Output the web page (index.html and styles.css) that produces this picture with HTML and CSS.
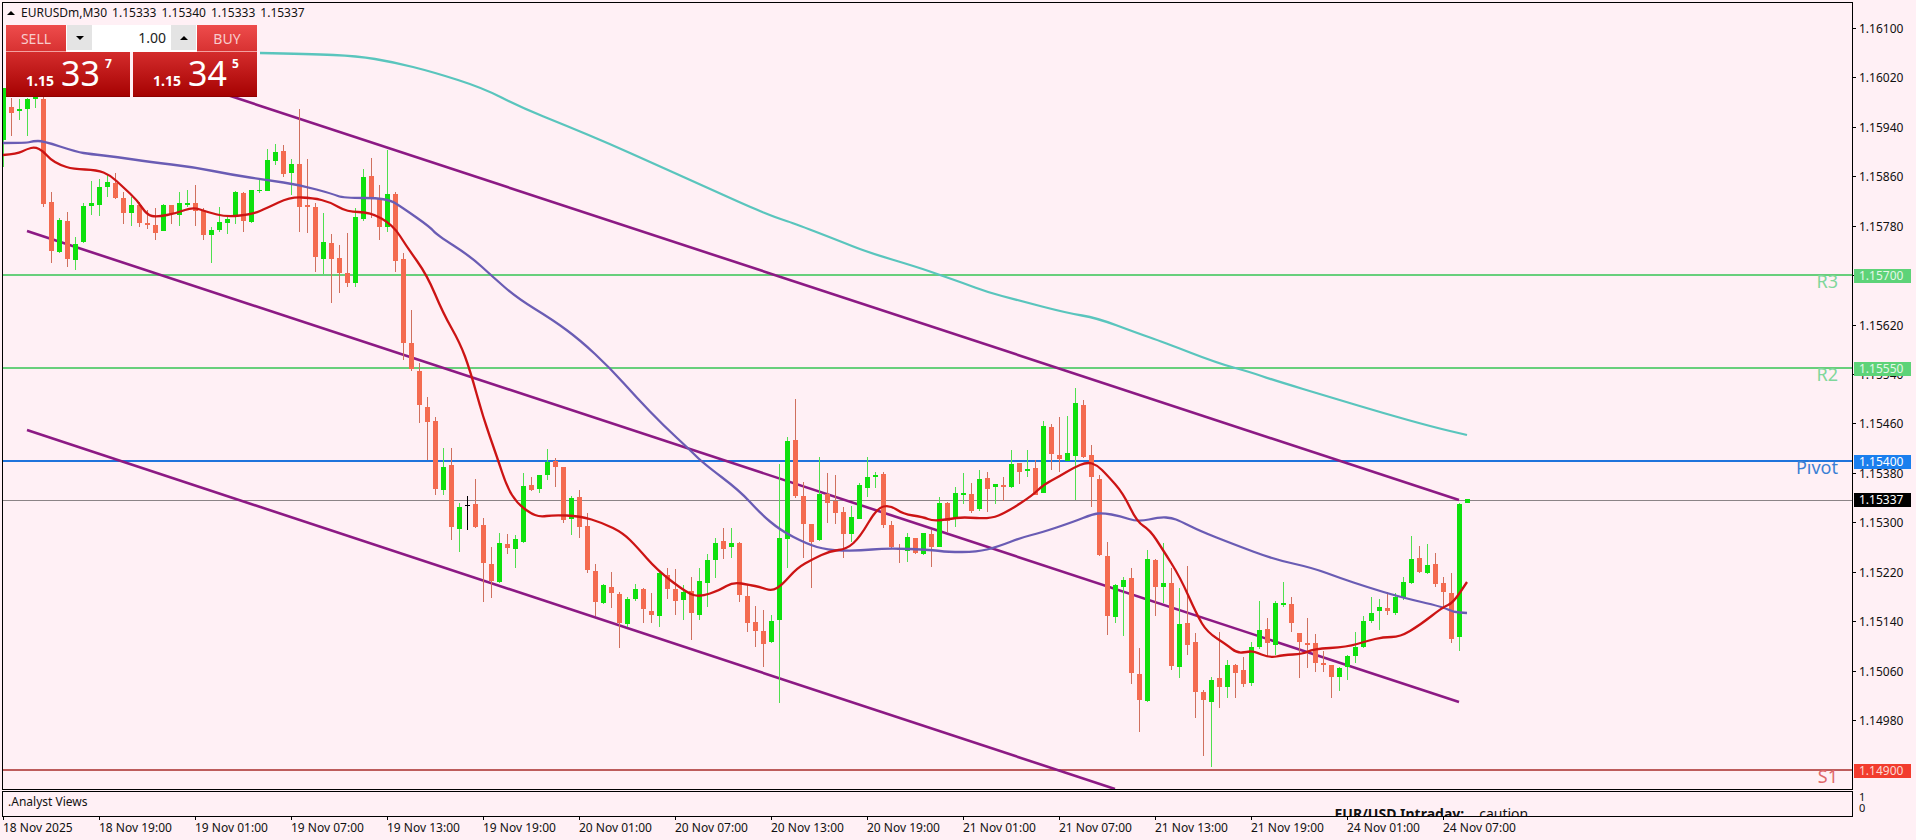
FILE: index.html
```html
<!DOCTYPE html>
<html lang="en">
<head>
    <meta charset="UTF-8">
    <title>EURUSDm,M30</title>
    <link rel="stylesheet" href="styles.css">
</head>
<body>
    <div class="terminal">
        <div class="workspace">
            <div class="panes">
                <div class="chart">
                    <svg class="plot" viewBox="3 3 1849 786" width="1849" height="786">
                        <!-- price levels -->
                        <line class="level level-r" x1="3" y1="275" x2="1852" y2="275"/>
                        <line class="level level-r" x1="3" y1="368" x2="1852" y2="368"/>
                        <line class="level level-pivot" x1="3" y1="461" x2="1852" y2="461"/>
                        <line class="level level-s" x1="3" y1="770" x2="1852" y2="770"/>
                        <line class="bid-line" x1="3" y1="500.5" x2="1852" y2="500.5"/>

                        <!-- channel -->
                        <line class="trend" x1="200" y1="86" x2="1459" y2="500"/>
                        <line class="trend" x1="27" y1="231" x2="1459" y2="702"/>
                        <line class="trend" x1="27" y1="430" x2="1115" y2="789"/>

                        <g id="candles"></g>
                        <g id="averages"></g>

                        <text class="level-name name-r" x="1838" y="288">R3</text>
                        <text class="level-name name-r" x="1838" y="381">R2</text>
                        <text class="level-name name-pivot" x="1838" y="474">Pivot</text>
                        <text class="level-name name-s" x="1838" y="783">S1</text>
                    </svg>

                    <div class="symbol-bar">
                        <span class="symbol-arrow"></span>
                        <span class="symbol-name">EURUSDm,M30</span>
                        <span>1.15333</span>
                        <span>1.15340</span>
                        <span>1.15333</span>
                        <span>1.15337</span>
                    </div>

                    <div class="trade-panel">
                        <div class="trade-row">
                            <div class="trade-btn sell-btn">SELL</div>
                            <div class="lots">
                                <div class="lots-step"><span class="arrow-down"></span></div>
                                <div class="lots-value">1.00</div>
                                <div class="lots-step"><span class="arrow-up"></span></div>
                            </div>
                            <div class="trade-btn buy-btn">BUY</div>
                        </div>
                        <div class="quote-row">
                            <div class="quote">
                                <span class="quote-head">1.15</span>
                                <span class="quote-big">33</span>
                                <span class="quote-point">7</span>
                            </div>
                            <div class="quote">
                                <span class="quote-head">1.15</span>
                                <span class="quote-big">34</span>
                                <span class="quote-point">5</span>
                            </div>
                        </div>
                    </div>
                </div>

                <div class="subwindow">
                    <span class="sub-title">.Analyst Views</span>
                    <span class="news"><b>EUR/USD Intraday:</b><span class="news-text">caution.</span></span>
                </div>
            </div>

            <div class="price-axis">
                <div class="price">1.16100</div>
                <div class="price">1.16020</div>
                <div class="price">1.15940</div>
                <div class="price">1.15860</div>
                <div class="price">1.15780</div>
                <div class="price"></div>
                <div class="price">1.15620</div>
                <div class="price">1.15540</div>
                <div class="price">1.15460</div>
                <div class="price">1.15380</div>
                <div class="price">1.15300</div>
                <div class="price">1.15220</div>
                <div class="price">1.15140</div>
                <div class="price">1.15060</div>
                <div class="price">1.14980</div>
                <div class="sub-scale">
                    <div>1</div>
                    <div>0</div>
                </div>

                <div class="tag tag-r3">1.15700</div>
                <div class="tag tag-r2">1.15550</div>
                <div class="tag tag-pivot">1.15400</div>
                <div class="tag tag-bid">1.15337</div>
                <div class="tag tag-s1">1.14900</div>
            </div>
        </div>

        <div class="time-axis">
            <div class="time">18 Nov 2025</div>
            <div class="time">18 Nov 19:00</div>
            <div class="time">19 Nov 01:00</div>
            <div class="time">19 Nov 07:00</div>
            <div class="time">19 Nov 13:00</div>
            <div class="time">19 Nov 19:00</div>
            <div class="time">20 Nov 01:00</div>
            <div class="time">20 Nov 07:00</div>
            <div class="time">20 Nov 13:00</div>
            <div class="time">20 Nov 19:00</div>
            <div class="time">21 Nov 01:00</div>
            <div class="time">21 Nov 07:00</div>
            <div class="time">21 Nov 13:00</div>
            <div class="time">21 Nov 19:00</div>
            <div class="time">24 Nov 01:00</div>
            <div class="time">24 Nov 07:00</div>
        </div>
    </div>

    <script src="chart.js"></script>
</body>
</html>
```

FILE: styles.css
```css
* {
    box-sizing: border-box;
}
body {
    margin: 0;
    background-color: #fff0f5;
    font-family: "Noto Sans", sans-serif;
    font-size: 12px;
    color: #111;
    overflow: hidden;
}
.terminal {
    width: 1916px;
    height: 840px;
    padding: 2px 0 0 2px;
}
.workspace {
    display: flex;
}
.panes {
    width: 1851px;
}

/* chart window */
.chart {
    position: relative;
    height: 788px;
    border: 1px solid #000;
}
.plot {
    display: block;
    overflow: hidden;
}
.level {
    stroke-width: 2;
}
.level-r {
    stroke: #68cf7c;
}
.level-pivot {
    stroke: #1f74dc;
}
.level-s {
    stroke: #bd5c5c;
}
.bid-line {
    stroke: #8b8486;
    stroke-width: 1;
}
.trend {
    stroke: #8c1a84;
    stroke-width: 2.6;
}
.ma {
    fill: none;
    stroke-width: 2.3;
    stroke-linejoin: round;
}
.ma-slow {
    stroke: #5ac5bd;
}
.ma-mid {
    stroke: #6a5cb4;
}
.ma-fast {
    stroke: #cc1414;
}
.wick-up {
    fill: #4fe04f;
}
.wick-down {
    fill: #d0705e;
}
.wick-doji {
    fill: #000;
}
.body-up {
    fill: #0ee00e;
}
.body-down {
    fill: #f46b50;
}
.level-name {
    font-size: 18px;
    text-anchor: end;
}
.name-r {
    fill: #7fd79b;
}
.name-pivot {
    fill: #3b7fd4;
}
.name-s {
    fill: #e0686a;
}

/* symbol line */
.symbol-bar {
    position: absolute;
    top: 2px;
    left: 4px;
    display: flex;
    align-items: center;
    gap: 5px;
    height: 16px;
    line-height: 16px;
}
.symbol-arrow {
    width: 0;
    height: 0;
    border-left: 4px solid transparent;
    border-right: 4px solid transparent;
    border-bottom: 4px solid #000;
    margin-right: 1px;
}

/* one click trading */
.trade-panel {
    position: absolute;
    top: 22px;
    left: 3px;
    width: 251px;
}
.trade-row {
    display: flex;
    height: 27px;
}
.trade-btn {
    width: 60px;
    text-align: center;
    line-height: 27px;
    font-size: 14px;
    color: #f8cccc;
    background: linear-gradient(#ee4c4c, #d83232);
    border-bottom: 1px solid #f3a0a0;
}
.lots {
    flex: 1;
    display: flex;
    background-color: #fff;
    padding: 0 1px 2px;
}
.lots-step {
    width: 25px;
    background-color: #e4e4e4;
    display: flex;
    align-items: center;
    justify-content: center;
}
.arrow-down,
.arrow-up {
    width: 0;
    height: 0;
    border-left: 4px solid transparent;
    border-right: 4px solid transparent;
}
.arrow-down {
    border-top: 4px solid #000;
}
.arrow-up {
    border-bottom: 4px solid #000;
}
.lots-value {
    flex: 1;
    text-align: right;
    padding-right: 5px;
    font-size: 14px;
    line-height: 25px;
    color: #222;
}
.quote-row {
    display: flex;
    gap: 3px;
}
.quote {
    flex: 1;
    height: 45px;
    display: flex;
    align-items: baseline;
    padding-left: 20px;
    line-height: 42px;
    color: #fff;
    background: linear-gradient(#d42c2c, #a60202);
    border-bottom: 1px solid #8f0000;
}
.quote-head {
    font-size: 14px;
    font-weight: bold;
    margin-right: 7px;
}
.quote-big {
    font-size: 34px;
    margin-right: 5px;
}
.quote-point {
    align-self: flex-start;
    font-size: 12px;
    font-weight: bold;
    line-height: 24px;
}

/* indicator window */
.subwindow {
    display: flex;
    height: 26px;
    margin-top: 1px;
    padding-left: 5px;
    border: 1px solid #000;
    overflow: hidden;
}
.sub-title {
    line-height: 20px;
}
.news {
    margin-left: auto;
    padding: 14px 320px 0 0;
    font-size: 14px;
    line-height: 16px;
    white-space: nowrap;
}
.news-text {
    margin-left: 15px;
}

/* axes */
.price-axis {
    position: relative;
    flex: 1;
    padding-top: 1.7px;
}
.price {
    display: flex;
    align-items: center;
    height: 49.45px;
}
.price::before {
    content: "";
    width: 3px;
    height: 1px;
    margin-right: 3px;
    background-color: #000;
}
.sub-scale {
    margin: 47px 0 0 6px;
    font-size: 11px;
    line-height: 10.5px;
}
.tag {
    position: absolute;
    left: 1px;
    width: 57px;
    height: 14px;
    padding-left: 5px;
    line-height: 14px;
    color: #fff;
}
.tag-r3 {
    top: 267px;
    background-color: #5dd378;
    color: #e4f7e8;
}
.tag-r2 {
    top: 360px;
    background-color: #5dd378;
    color: #e4f7e8;
}
.tag-pivot {
    top: 453px;
    background-color: #1b7fee;
}
.tag-bid {
    top: 491px;
    background-color: #000;
}
.tag-s1 {
    top: 762px;
    background-color: #f23c2e;
    color: #fbd8d4;
}
.time-axis {
    display: flex;
    margin-left: 1px;
}
.time {
    width: 96px;
    flex: none;
    white-space: nowrap;
    line-height: 14px;
}
.time::before {
    content: "";
    display: block;
    width: 1px;
    height: 3px;
    margin-bottom: 1px;
    background-color: #000;
}
```

FILE: chart.js
```js
// candles read off the chart: [high, top of body, bottom of body, low, kind]
// each block holds y values at 3x scale, measured from its own "top"
const blocks = [
    { top: 90, first: 0, bars: [
        [-6,-6,150,230,"g"],[25,50,68,138,"r"],[28,56,62,90,"g"],[25,28,58,138,"g"],[15,20,26,55,"g"],
        [20,28,342,350,"r"],[305,336,484,520,"r"],[385,390,486,490,"g"],[365,392,506,530,"r"],[440,462,510,540,"g"],
        [338,348,456,460,"g"],[272,340,348,375,"g"],[268,292,344,378,"g"],[255,276,290,320,"g"],[250,280,324,328,"r"],
        [305,324,368,403,"r"],[320,346,368,408,"g"],[335,345,400,410,"r"],[360,400,404,418,"r"],[355,405,428,450,"r"],
        [342,344,422,424,"g"],[344,346,372,402,"r"],[305,340,374,408,"g"],[300,340,346,350,"g"],[286,340,364,408,"r"],
        [355,362,436,450,"r"],[410,420,436,520,"g"],[350,396,420,425,"g"],[375,386,400,432,"g"],[304,306,376,402,"g"],
        [306,308,392,425,"r"],[300,300,396,398,"g"],[265,300,304,310,"g"],[178,210,302,304,"g"],[162,186,214,225,"g"],
        [165,184,252,262,"r"],[208,222,248,315,"g"],[58,222,350,425,"r"],[208,345,350,430,"r"],[340,350,500,545,"r"],
        [370,456,506,552,"g"],[432,460,506,640,"r"],[465,505,548,610,"r"],[428,550,578,590,"r"],[355,380,580,592,"g"],
        [238,260,386,392,"g"],[205,258,320,385,"r"]
    ] },
    { top: 130, first: 47, bars: [
        [165,205,292,330,"r"],[60,192,290,305,"g"],[185,192,392,425,"r"],[370,388,638,690,"r"],[540,640,718,722,"r"],
        [700,722,826,878,"r"],[800,832,876,990,"r"],[860,874,1076,1095,"r"],[955,1012,1080,1095,"g"],[955,1005,1190,1230,"r"],
        [1120,1130,1196,1265,"g"],[1098,1125,1127,1200,"k"],[1048,1122,1192,1195,"r"],[1165,1186,1298,1415,"r"],[1250,1302,1352,1405,"r"],
        [1210,1238,1356,1360,"g"],[1212,1242,1254,1272,"r"],[1215,1226,1258,1315,"g"],[1028,1068,1236,1238,"g"],[1040,1064,1080,1082,"r"],
        [1034,1036,1078,1088,"g"],[958,995,1034,1050,"g"],[985,994,1010,1072,"r"],[1010,1012,1170,1180,"r"],[1098,1104,1166,1215,"g"],
        [1080,1100,1192,1225,"r"],[1150,1188,1320,1330,"r"],[1302,1324,1416,1458,"r"],[1362,1366,1418,1422,"g"],[1325,1370,1390,1435,"r"],
        [1385,1392,1480,1555,"r"],[1400,1408,1482,1490,"g"],[1362,1378,1408,1412,"g"],[1375,1378,1438,1478,"r"],[1388,1442,1454,1480,"r"],
        [1322,1330,1458,1490,"g"],[1315,1336,1378,1408,"r"],[1318,1378,1414,1455,"r"],[1365,1386,1410,1470,"g"],[1340,1382,1450,1530,"r"],
        [1315,1354,1456,1470,"g"],[1272,1290,1360,1430,"g"],[1225,1238,1290,1345,"g"],[1195,1232,1258,1288,"r"],[1195,1238,1252,1285,"g"],
        [1236,1238,1394,1416,"r"]
    ] },
    { top: 400, first: 93, bars: [
        [555,588,668,695,"r"],[618,666,692,740,"r"],[630,694,732,800,"r"],[645,664,726,730,"g"],[192,414,660,910,"g"],
        [112,122,418,505,"g"],[-3,120,288,295,"r"],[245,288,372,475,"r"],[372,372,426,565,"r"],[170,282,420,422,"g"],
        [220,282,308,368,"r"],[225,302,338,372,"r"],[320,336,402,475,"r"],[318,352,402,425,"g"],[250,254,356,358,"g"],
        [172,232,264,290,"g"],[215,226,230,264,"g"],[215,222,374,385,"r"],[362,376,442,446,"r"],[432,444,450,488,"r"],
        [400,410,454,485,"g"],[413,415,458,462,"r"],[398,400,462,464,"g"],[390,402,440,500,"r"],[290,310,440,442,"g"],
        [305,308,362,395,"r"],[262,280,356,382,"g"],[220,280,286,312,"g"],[250,282,332,338,"r"],[210,238,326,332,"g"],
        [215,235,268,335,"r"],[252,252,262,312,"g"],[232,254,260,302,"r"],[150,192,262,265,"g"],[188,190,216,252,"r"],
        [150,208,212,230,"g"],[180,205,284,286,"r"],[62,78,278,280,"g"],[72,82,162,210,"r"],[52,166,176,215,"r"],
        [48,160,182,184,"g"],[-36,10,168,300,"g"],[0,14,172,175,"r"],[135,165,232,320,"r"],[225,238,466,468,"r"],
        [425,468,648,705,"r"],[552,556,650,670,"g"]
    ] },
    { top: 380, first: 140, bars: [
        [590,600,620,768,"g"],[565,595,880,912,"r"],[805,882,960,1055,"r"],[510,538,962,965,"g"],[538,540,622,708,"r"],
        [490,610,620,668,"g"],[565,610,858,870,"r"],[625,732,862,895,"g"],[558,730,794,825,"r"],[760,786,935,1015,"r"],
        [930,936,960,1128,"r"],[892,900,965,1162,"g"],[755,895,922,985,"r"],[840,855,920,955,"g"],[852,854,878,955,"r"],
        [832,870,912,922,"r"],[785,800,908,918,"g"],[662,750,802,808,"g"],[715,746,790,828,"r"],[662,670,796,825,"g"],
        [605,670,676,682,"g"],[650,672,728,755,"r"],[758,760,786,895,"r"],[715,788,794,865,"r"],[762,788,848,875,"r"],
        [812,850,856,876,"r"],[855,856,890,955,"r"],[862,864,892,932,"g"],[825,828,862,900,"g"],[755,800,828,850,"g"],
        [708,724,802,804,"g"],[652,698,722,730,"g"],[658,680,694,750,"g"],[635,684,694,705,"r"],[640,650,698,705,"g"],
        [590,606,650,660,"g"],[468,538,610,612,"g"],[498,535,576,578,"r"],[492,556,578,582,"g"],[520,552,612,622,"r"],
        [590,610,635,680,"r"],[578,640,778,790,"r"],[368,372,770,812,"g"],[358,358,368,368,"g"]
    ] }
];

// moving averages, as x,y pairs in page pixels
const averages = {
    "ma-slow": [260,53, 310,54, 357,56, 393,62, 433,72, 483,88, 520,107, 567,126, 610,144, 650,162, 697,183, 750,207,
        777,218, 793,223, 837,240, 867,252, 917,267, 940,275, 963,283, 987,292, 1017,300, 1067,313, 1097,318, 1137,333,
        1163,342, 1217,363, 1250,372, 1273,380, 1333,398, 1383,413, 1433,427, 1467,435],
    "ma-mid": [3,143, 27,143, 33,141, 43,141, 77,152, 90,154, 117,157, 150,162, 193,167, 233,175, 267,180, 300,185,
        333,194, 343,198, 387,198, 403,208, 430,227, 437,235, 470,256, 493,277, 517,298, 553,320, 580,340, 610,368,
        637,398, 663,425, 690,450, 703,463, 740,491, 760,513, 780,530, 807,544, 827,550, 857,551, 887,548, 933,550,
        947,552, 977,552, 997,547, 1023,537, 1040,533, 1073,522, 1093,514, 1103,513, 1120,516, 1138,522, 1160,517,
        1172,518, 1180,521, 1200,531, 1233,544, 1273,559, 1313,568, 1340,578, 1367,587, 1400,597, 1443,607, 1453,612, 1467,613],
    "ma-fast": [3,155, 17,154, 27,149, 35,147, 43,151, 50,159, 60,165, 73,169, 97,170, 110,175, 123,187, 137,200,
        147,215, 157,217, 177,213, 193,207, 207,212, 227,217, 253,214, 267,208, 290,197, 313,198, 330,202, 347,212,
        370,212, 393,225, 407,247, 427,275, 443,313, 460,343, 470,370, 483,417, 497,457, 507,487, 517,503, 530,513,
        540,517, 553,515, 580,516, 603,523, 623,533, 637,547, 657,570, 687,593, 700,597, 720,590, 733,582, 750,585,
        760,587, 772,591, 782,585, 797,568, 813,559, 830,551, 847,549, 860,537, 877,508, 890,505, 903,514, 923,517,
        933,521, 950,519, 963,517, 990,519, 1007,512, 1033,495, 1043,485, 1060,476, 1073,468, 1087,462, 1097,465,
        1107,475, 1123,493, 1137,522, 1150,530, 1163,550, 1180,577, 1197,615, 1207,632, 1227,645, 1237,653, 1247,652,
        1253,651, 1270,658, 1283,655, 1303,654, 1313,649, 1347,647, 1367,641, 1383,637, 1400,637, 1420,625, 1443,607,
        1453,603, 1467,582]
};

const STEP = 8;
const NS = "http://www.w3.org/2000/svg";
const candles = document.getElementById("candles");
const avgGroup = document.getElementById("averages");
const suffix = { g: "up", r: "down", k: "doji" };

function addRect(x, y1, y2, width, cls) {
    const rect = document.createElementNS(NS, "rect");
    rect.setAttribute("x", x);
    rect.setAttribute("y", y1);
    rect.setAttribute("width", width);
    rect.setAttribute("height", Math.max(y2 - y1, 1));
    rect.setAttribute("class", cls);
    candles.appendChild(rect);
}

blocks.forEach(block => {
    const toY = v => Math.round(block.top + v / 3);
    block.bars.forEach((bar, n) => {
        const [high, bodyTop, bodyBottom, low, kind] = bar;
        const x = 3 + (block.first + n) * STEP;
        addRect(x, toY(high), toY(low), 1, "wick-" + suffix[kind]);
        addRect(x - 2, toY(bodyTop), toY(bodyBottom), 5, "body-" + suffix[kind]);
    });
});

// rounded path through the midpoints so the curves don't look polygonal
Object.keys(averages).forEach(name => {
    const p = averages[name];
    let d = `M${p[0]} ${p[1]}`;
    for (let i = 2; i < p.length - 2; i += 2) {
        const midX = (p[i] + p[i + 2]) / 2;
        const midY = (p[i + 1] + p[i + 3]) / 2;
        d += ` Q${p[i]} ${p[i + 1]} ${midX} ${midY}`;
    }
    d += ` L${p[p.length - 2]} ${p[p.length - 1]}`;

    const path = document.createElementNS(NS, "path");
    path.setAttribute("d", d);
    path.setAttribute("class", "ma " + name);
    avgGroup.appendChild(path);
});
```
